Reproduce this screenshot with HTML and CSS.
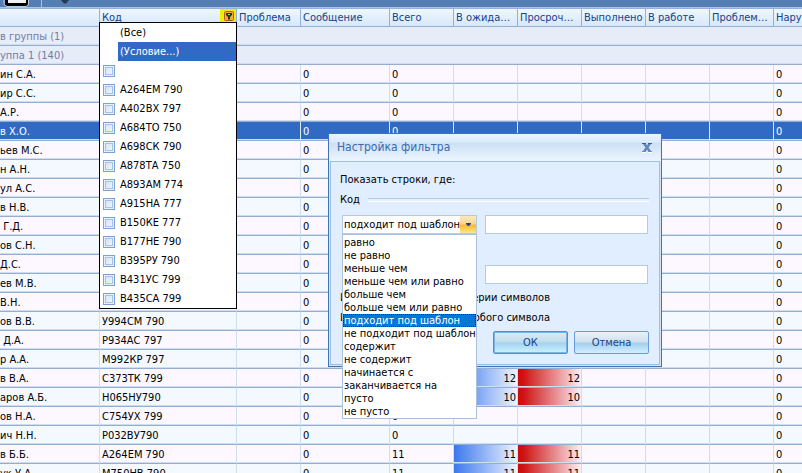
FILE: index.html
```html
<!DOCTYPE html>
<html lang="ru">
<head>
<meta charset="utf-8">
<title>Настройка фильтра</title>
<link rel="stylesheet" href="styles.css">
</head>
<body>
<div class="toolbar">
  <svg class="tool-window" width="28" height="7" viewBox="0 0 28 7" aria-hidden="true"><path d="M3 0H26V4Q26 6 24 6H5Q3 6 3 4Z" fill="#000"/><path d="M6 0H24V3H6Z" fill="#f2f2f2"/><path d="M2 0V4Q3 6 5 6.500H24Q26 6 26.500 4V0" fill="none" stroke="#b9cce4"/></svg>
  <span class="tool-divider"></span>
  <svg class="tool-arrow" width="10" height="5" viewBox="0 0 10 5" aria-hidden="true"><path d="M1 0H9L6 3.500H4Z" fill="#263a57"/></svg>
</div>

<table class="grid">
  <colgroup><col class="c-name"><col class="c-code"><col class="c-std"><col class="c-msg"><col class="c-std"><col class="c-std"><col class="c-std"><col class="c-std"><col class="c-std"><col class="c-std"><col></colgroup>
  <thead>
    <tr><th></th><th><div class="th-code"><span>Код</span><button class="funnel" type="button" aria-label="Фильтр"><svg width="10" height="10" viewBox="0 0 10 10" aria-hidden="true"><rect x=".5" y=".5" width="9" height="9" rx="1" fill="#f5a936" stroke="#b95a10"/><path d="M2 2H8V4L6 6V8.500H4V6L2 4Z" fill="#20401c"/><path d="M4 3H6V4H4Z" fill="#cbd84a"/></svg></button></div></th><th>Проблема</th><th>Сообщение</th><th>Всего</th><th>В ожидании</th><th>Просрочено</th><th class="cut">Выполнено</th><th>В работе</th><th>Проблемные</th><th class="cut">Нарушения</th></tr>
  </thead>
  <tbody>
    <tr class="group"><td colspan="11">в группы (1)</td></tr>
    <tr class="group"><td colspan="11">уппа 1 (140)</td></tr>
    <tr><td>ин С.А.</td><td></td><td></td><td>0</td><td>0</td><td></td><td></td><td></td><td></td><td></td><td>0</td></tr>
    <tr><td>ир С.С.</td><td></td><td></td><td>0</td><td>0</td><td></td><td></td><td></td><td></td><td></td><td>0</td></tr>
    <tr><td>А.Р.</td><td></td><td></td><td>0</td><td>0</td><td></td><td></td><td></td><td></td><td></td><td>0</td></tr>
    <tr class="selected"><td>в Х.О.</td><td></td><td></td><td>0</td><td>0</td><td></td><td></td><td></td><td></td><td></td><td>0</td></tr>
    <tr><td>ьев М.С.</td><td></td><td></td><td>0</td><td></td><td></td><td></td><td></td><td></td><td></td><td>0</td></tr>
    <tr><td>н А.Н.</td><td></td><td></td><td>0</td><td></td><td></td><td></td><td></td><td></td><td></td><td>0</td></tr>
    <tr><td>ул А.С.</td><td></td><td></td><td>0</td><td></td><td></td><td></td><td></td><td></td><td></td><td>0</td></tr>
    <tr><td>в Н.В.</td><td></td><td></td><td>0</td><td></td><td></td><td></td><td></td><td></td><td></td><td>0</td></tr>
    <tr><td>&nbsp;Г.Д.</td><td></td><td></td><td>0</td><td></td><td></td><td></td><td></td><td></td><td></td><td>0</td></tr>
    <tr><td>ов С.Н.</td><td></td><td></td><td>0</td><td></td><td></td><td></td><td></td><td></td><td></td><td>0</td></tr>
    <tr><td>Д.С.</td><td></td><td></td><td>0</td><td></td><td></td><td></td><td></td><td></td><td></td><td>0</td></tr>
    <tr><td>ев М.В.</td><td></td><td></td><td>0</td><td></td><td></td><td></td><td></td><td></td><td></td><td>0</td></tr>
    <tr><td>В.Н.</td><td></td><td></td><td>0</td><td></td><td></td><td></td><td></td><td></td><td></td><td>0</td></tr>
    <tr><td>ов В.В.</td><td>У994СМ 790</td><td></td><td>0</td><td></td><td></td><td></td><td></td><td></td><td></td><td>0</td></tr>
    <tr><td>&nbsp;Д.А.</td><td>Р934АС 797</td><td></td><td>0</td><td></td><td></td><td></td><td></td><td></td><td></td><td>0</td></tr>
    <tr><td>р А.А.</td><td>М992КР 797</td><td></td><td>0</td><td></td><td></td><td></td><td></td><td></td><td></td><td>0</td></tr>
    <tr><td>в В.А.</td><td>С373ТК 799</td><td></td><td>0</td><td></td><td class="bar wait">12</td><td class="bar late">12</td><td></td><td></td><td></td><td>0</td></tr>
    <tr><td>аров А.Б.</td><td>Н065НУ790</td><td></td><td>0</td><td></td><td class="bar wait">10</td><td class="bar late">10</td><td></td><td></td><td></td><td>0</td></tr>
    <tr><td>ов Н.А.</td><td>С754УХ 799</td><td></td><td>0</td><td>0</td><td></td><td></td><td></td><td></td><td></td><td>0</td></tr>
    <tr><td>ич Н.Н.</td><td>Р032ВУ790</td><td></td><td>0</td><td>0</td><td></td><td></td><td></td><td></td><td></td><td>0</td></tr>
    <tr><td>в Б.Б.</td><td>А264ЕМ 790</td><td></td><td>0</td><td>11</td><td class="bar wait">11</td><td class="bar late">11</td><td></td><td></td><td></td><td>0</td></tr>
    <tr><td>ук У.А.</td><td>М750НВ 790</td><td></td><td>0</td><td>11</td><td class="bar wait">11</td><td class="bar late">11</td><td></td><td></td><td></td><td>0</td></tr>
  </tbody>
</table>

<div class="filter-menu">
  <button type="button">(Все)</button>
  <button type="button" class="active">(Условие...)</button>
  <label><input type="checkbox"><span></span></label>
  <label><input type="checkbox"><span>А264ЕМ 790</span></label>
  <label><input type="checkbox"><span>А402ВХ 797</span></label>
  <label><input type="checkbox"><span>А684ТО 750</span></label>
  <label><input type="checkbox"><span>А698СК 790</span></label>
  <label><input type="checkbox"><span>А878ТА 750</span></label>
  <label><input type="checkbox"><span>А893АМ 774</span></label>
  <label><input type="checkbox"><span>А915НА 777</span></label>
  <label><input type="checkbox"><span>В150КЕ 777</span></label>
  <label><input type="checkbox"><span>В177НЕ 790</span></label>
  <label><input type="checkbox"><span>В395РУ 790</span></label>
  <label><input type="checkbox"><span>В431УС 799</span></label>
  <label><input type="checkbox"><span>В435СА 799</span></label>
</div>

<form class="dialog" role="dialog" aria-labelledby="dialog-title">
  <header>
    <h1 id="dialog-title">Настройка фильтра</h1>
    <button class="close" type="button" aria-label="Закрыть"><svg width="10" height="10" viewBox="0 0 10 10" aria-hidden="true"><path d="M0 9.500H4M6 9.500H10" stroke="#fff"/><path d="M1 1H4L5 2.500L6 1H9L6.500 4.500L9 8H6L5 6.500L4 8H1L3.500 4.500Z" fill="#5f84b8"/><path d="M0 0H4V1H0ZM6 0H10V1H6Z" fill="#3a5f96"/><path d="M0 8H4V9H0ZM6 8H10V9H6Z" fill="#6c90c2"/></svg></button>
  </header>
  <div class="dialog-body">
    <p class="intro">Показать строки, где:</p>
    <fieldset>
      <legend class="field-name">Код</legend>
      <div class="condition">
        <div class="combo">
          <select aria-label="Условие"><option>подходит под шаблон</option></select>
          <span class="combo-arrow"><svg width="5" height="3" viewBox="0 0 5 3" aria-hidden="true"><path d="M0 0H5V1L3 3H2L0 1Z" fill="#1e4590"/></svg></span>
          <ul class="combo-list" role="listbox">
            <li role="option">равно</li>
            <li role="option">не равно</li>
            <li role="option">меньше чем</li>
            <li role="option">меньше чем или равно</li>
            <li role="option">больше чем</li>
            <li role="option">больше чем или равно</li>
            <li role="option" class="active" aria-selected="true">подходит под шаблон</li>
            <li role="option">не подходит под шаблон</li>
            <li role="option">содержит</li>
            <li role="option">не содержит</li>
            <li role="option">начинается с</li>
            <li role="option">заканчивается на</li>
            <li role="option">пусто</li>
            <li role="option">не пусто</li>
          </ul>
        </div>
        <input type="text" aria-label="Значение">
      </div>
      <div class="condition second">
        <span class="combo"></span>
        <input type="text" aria-label="Второе значение">
      </div>
    </fieldset>
    <p class="hint"><span>И</span><span>серии символов</span></p>
    <p class="hint"><span>И</span><span>любого символа</span></p>
    <footer>
      <button type="submit" class="primary">ОК</button>
      <button type="button">Отмена</button>
    </footer>
  </div>
</form>
</body>
</html>
```
FILE: styles.css
```css
* { box-sizing: border-box; }
html { height: 100%; overflow: hidden; }
body {
  margin: 0;
  height: 100%;
  overflow: hidden;
  position: relative;
  background: #fff;
  color: #000;
  font: 11px/17px "DejaVu Sans Condensed", "Noto Sans", sans-serif;
}
button, input, select { font: inherit; color: inherit; margin: 0; }
p, h1, ul, fieldset { margin: 0; padding: 0; border: 0; }
svg { display: block; }

.toolbar {
  display: flex;
  height: 8px;
  padding-left: 2px;
  background: #557eb3;
  border-bottom: 1px solid #a9c4e6;
}
.tool-divider { width: 1px; margin: 0 18px 0 11px; background: #a5c1e6; }

/* Grid */
.grid {
  width: 100%;
  table-layout: fixed;
  border-collapse: separate;
  border-spacing: 0;
}
.c-name { width: 100px; }
.c-code { width: 137px; }
.c-msg { width: 89px; }
.c-std { width: 64px; }
.grid th, .grid td {
  height: 19px;
  padding: 1px 1px 0 2px;
  overflow: hidden;
  white-space: nowrap;
  text-align: left;
  line-height: 16px;
  border-right: 1px solid #cfdeee;
  border-bottom: 1px solid #93aed1;
}
.grid td:first-child { padding-left: 0; }
.grid td:last-child, .grid th:last-child { border-right: 0; }
.grid th {
  padding: 0 3px 0 2px;
  line-height: 17px;
  color: #15428b;
  font-weight: normal;
  text-overflow: ellipsis;
  border-top: 1px solid #93b1da;
  border-right-color: #93b1da;
  background: linear-gradient(#eff7ff, #d6e8fb);
}
.grid th.cut { padding-right: 0; text-overflow: clip; }
.grid td { background: #fdf7ff; box-shadow: inset 0 -1px #cfdeee; }
.grid tr:nth-child(even) td { background: #f3f9ff; }
.grid tr.group td { color: #7679a2; background: #e6edf9; }
.grid tr.selected td {
  color: #fff;
  background: #316ac5;
  border-right-color: #dbe8f8;
}
.grid td.bar { text-align: right; }
.grid tr td.wait { background: linear-gradient(90deg, #3c78ed, #eef4ff); }
.grid tr td.late { background: linear-gradient(90deg, #cf0a0a, #cf1212 8%, #fbeff3); }
.th-code { display: flex; justify-content: space-between; height: 17px; margin-right: -3px; }
.funnel {
  display: grid;
  justify-items: end;
  align-items: start;
  width: 16px;
  height: 17px;
  padding: 2px 2px 0 0;
  border: 0;
  background: #eef000;
}

/* Column filter drop-down */
.filter-menu {
  position: absolute;
  left: 99px;
  top: 22px;
  width: 138px;
  border: 1px solid #000;
  background: #fff;
}
.filter-menu button, .filter-menu label { display: flex; align-items: center; height: 19px; }
.filter-menu button {
  width: 118px;
  margin-left: 18px;
  padding: 0 2px;
  border: 0;
  background: none;
}
.filter-menu .active { color: #fff; background: #316ac5; }
.filter-menu label { gap: 5px; padding-left: 3px; }
.filter-menu input {
  appearance: none;
  width: 12px;
  height: 12px;
  border: 1px solid #7ba2d6;
  background: linear-gradient(135deg, #cddff3, #f6faff);
  box-shadow: inset 0 0 0 1px #e8f1fb, inset 0 0 0 2px #a9c1e2;
}

/* Dialog */
.dialog {
  position: absolute;
  left: 328px;
  top: 133px;
  width: 334px;
  padding: 0 1px 1px;
  border: 1px solid #3e73b4;
  background: #d2e4fa;
}
.dialog header {
  display: flex;
  align-items: center;
  justify-content: space-between;
  height: 27px;
  margin: 0 -1px;
  padding: 0 9px 0 8px;
  background: linear-gradient(#eaf4fe, #dcebfa 8px, #cbe0f6 9px, #edf5fe);
}
.dialog h1 { font-size: 12px; font-weight: normal; color: #3d68ad; }
.close { padding: 0; border: 0; background: none; }
.dialog-body {
  padding: 9px 10px 10px 9px;
  border: 1px solid #9dc0e8;
  background: #e1eeff;
}
.intro { margin-bottom: 2px; }
.field-name {
  display: flex;
  align-items: center;
  gap: 8px;
  width: 100%;
  padding: 0;
  line-height: 20px;
}
.field-name::after {
  content: "";
  flex: 1;
  height: 2px;
  border-top: 1px solid #b5c9e4;
  border-bottom: 1px solid #fff;
}
.condition { display: flex; gap: 8px; padding: 5px 1px 0 2px; }
.condition.second { padding-top: 31px; }
.combo { position: relative; flex: none; width: 135px; }
.combo select {
  appearance: none;
  display: block;
  width: 100%;
  height: 19px;
  padding: 0 0 0 1px;
  border: 1px solid #b3c9e4;
  border-radius: 0;
  background: #fff;
}
.combo-arrow {
  position: absolute;
  top: 1px;
  right: 1px;
  display: grid;
  place-items: center;
  width: 16px;
  height: 17px;
  background: linear-gradient(#fce9c0, #fbd58f 8px, #f7b92e 9px, #fde68c);
  pointer-events: none;
}
.condition input {
  flex: 1;
  min-width: 0;
  height: 19px;
  padding: 0 2px;
  border: 1px solid #b3c9e4;
  background: #fff;
}
.combo-list {
  position: absolute;
  z-index: 1;
  left: 0;
  top: 19px;
  width: 100%;
  padding-top: 1px;
  list-style: none;
  line-height: 13px;
  white-space: nowrap;
  border: 1px solid #a9c0de;
  background: #fff;
}
.combo-list li { padding-left: 1px; }
.combo-list .active { color: #fff; background: #0078d7; outline: 1px dotted #222; outline-offset: -1px; }
.hint {
  display: flex;
  justify-content: space-between;
  width: 210px;
  line-height: 20px;
  white-space: nowrap;
}
fieldset + .hint { margin-top: 4px; }
footer { display: flex; justify-content: flex-end; gap: 6px; margin-top: 3px; }
footer button {
  width: 75px;
  height: 23px;
  padding: 0;
  color: #15428b;
  border: 1px solid #6a9cdb;
  border-radius: 2px;
  background: linear-gradient(#eaf2f9, #cfdfed 10px, #a3cff0 11px, #d2efff);
}
footer .primary {
  border-color: #4f90d4;
  background: linear-gradient(#ddebf4, #c0dcec 10px, #a3d3f1 11px, #cdf3ff);
  box-shadow: inset 0 0 0 1px #7bb5e6;
}
```
